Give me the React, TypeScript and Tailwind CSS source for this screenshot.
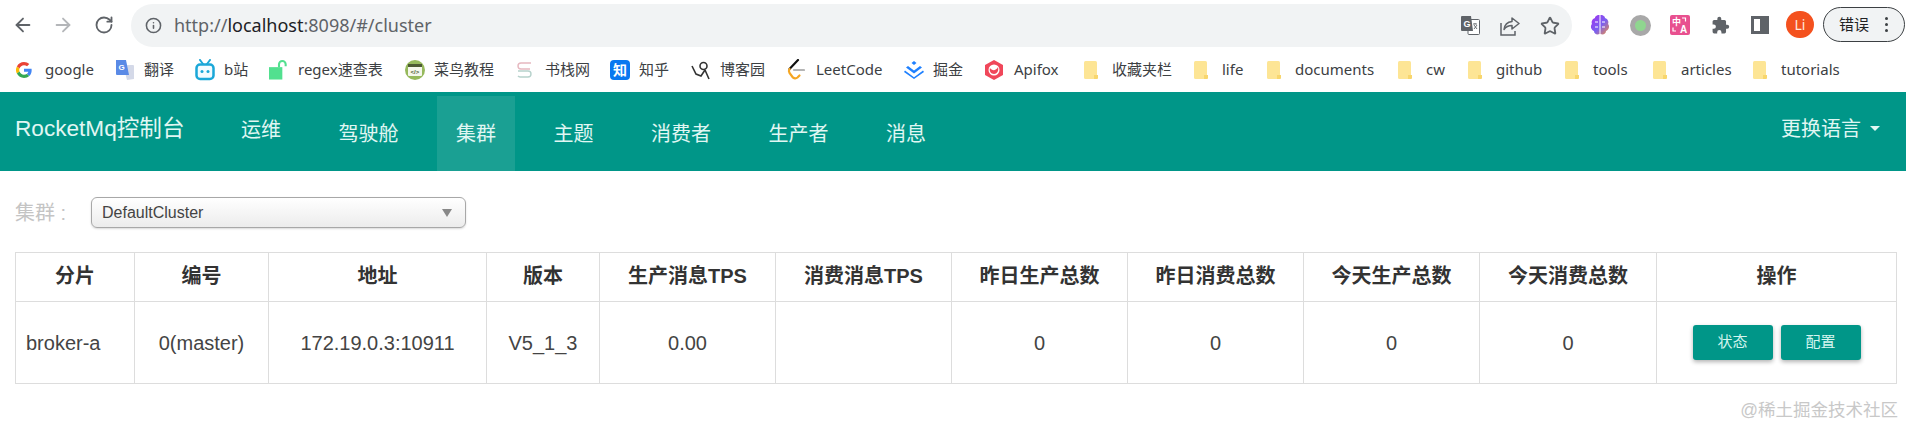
import type { ReactNode } from "react";
import { ArrowLeft, ArrowRight, Info, RotateCw, Star } from "lucide-react";

const body = "font-['Liberation_Sans','Noto_Sans_CJK_SC',sans-serif]";
const chrome = "font-['Noto_Sans','Noto_Sans_CJK_SC',sans-serif]";

function Folder() {
  return (
    <svg width="16" height="20" viewBox="0 0 16 20" className="shrink-0">
      <rect x="1" y="1" width="13" height="18" rx="1.5" fill="#fde595" />
      <path d="M11 15h4v3a1 1 0 0 1-1 1h-3z" fill="#f8d66d" />
    </svg>
  );
}

function GoogleIcon() {
  return (
    <svg width="16" height="16" viewBox="0 0 48 48">
      <path fill="#EA4335" d="M24 9.5c3.5 0 6.7 1.3 9.1 3.4l6.800-6.800C35.800 2.400 30.300 0 24 0 14.600 0 6.600 5.400 2.700 13.200l7.900 6.100C12.500 13.500 17.800 9.500 24 9.500z" />
      <path fill="#4285F4" d="M47 24.500c0-1.600-.1-3.100-.4-4.500H24v9h13c-.6 3-2.300 5.500-4.800 7.200l7.700 6C44.400 37.900 47 31.800 47 24.500z" />
      <path fill="#FBBC05" d="M10.500 28.700a14.500 14.500 0 0 1 0-9.400l-7.900-6.100a24 24 0 0 0 0 21.600z" />
      <path fill="#34A853" d="M24 48c6.500 0 11.900-2.100 15.900-5.800l-7.700-6c-2.100 1.400-4.900 2.300-8.200 2.300-6.200 0-11.500-4-13.400-9.800l-7.900 6.100C6.600 42.600 14.600 48 24 48z" />
    </svg>
  );
}

function TranslateIcon() {
  return (
    <svg width="20" height="22" viewBox="0 0 20 22">
      <path d="M8 6h10a1 1 0 0 1 1 1v13l-7 1z" fill="#d4d9e8" />
      <path d="M1 1h10l3 15H2a1 1 0 0 1-1-1z" fill="#5a8ae6" />
      <text x="3.500" y="11" fontSize="8" fontWeight="700" fill="#fff" fontFamily="Liberation Sans">G</text>
    </svg>
  );
}

function BiliIcon() {
  return (
    <svg width="20" height="22" viewBox="0 0 20 22">
      <path d="M5 1l3 4M15 1l-3 4" stroke="#1aa7d8" strokeWidth="2" strokeLinecap="round" />
      <rect x="1.500" y="5.500" width="17" height="14.500" rx="3.500" fill="#f2fbff" stroke="#1aa7d8" strokeWidth="2.500" />
      <circle cx="7" cy="12.500" r="1.500" fill="#1aa7d8" />
      <circle cx="13" cy="12.500" r="1.500" fill="#1aa7d8" />
    </svg>
  );
}

function LockIcon() {
  return (
    <svg width="21" height="22" viewBox="0 0 21 22">
      <rect x="0" y="8" width="14" height="13" fill="#52e08f" />
      <path d="M10.500 8V5a3.500 3.500 0 0 1 7 0v2" fill="none" stroke="#52e08f" strokeWidth="2.200" />
    </svg>
  );
}

function RunoobIcon() {
  return (
    <svg width="20" height="20" viewBox="0 0 20 20">
      <circle cx="10" cy="10" r="10" fill="#96b95c" />
      <rect x="3" y="4" width="14" height="12" rx="1" fill="#f4f7ec" />
      <rect x="3" y="4" width="14" height="3" fill="#4c5a33" />
      <text x="5.500" y="14" fontSize="6" fontWeight="700" fill="#4c5a33" fontFamily="Liberation Sans">{"</>"}</text>
    </svg>
  );
}

function BookStackIcon() {
  return (
    <svg width="17" height="18" viewBox="0 0 17 18" fill="none" strokeWidth="1.400">
      <path d="M15 2H5a2.800 2.800 0 0 0 0 6h9" stroke="#e6b8c0" />
      <path d="M15 8a2.800 2.800 0 0 1 0 .1M2 10h10a3 3 0 0 1 0 6H4a3 3 0 0 1-2-1" stroke="#b7d2cc" />
    </svg>
  );
}

function ZhihuIcon() {
  return (
    <div className={"flex h-5 w-5 items-center justify-center rounded-[4px] bg-[#0a78f0] text-[14px] font-bold leading-none text-white " + chrome}>知</div>
  );
}

function CnblogsIcon() {
  return (
    <svg width="20" height="20" viewBox="0 0 20 20" fill="none" stroke="#333" strokeWidth="1.600">
      <circle cx="12.500" cy="6" r="3.500" />
      <path d="M1 6l4 8 5 2 4-6M14 10l4 9" />
    </svg>
  );
}

function LeetCodeIcon() {
  return (
    <svg width="18" height="21" viewBox="0 0 18 21" fill="none" strokeWidth="2.200" strokeLinecap="round">
      <path d="M11 1L2.500 10" stroke="#111" />
      <path d="M2.500 10a4 4 0 0 0 0 4l3 4a3.500 3.500 0 0 0 5 .5l2-2" stroke="#f5a623" />
      <path d="M7 11h10" stroke="#b5b5b5" />
    </svg>
  );
}

function JuejinIcon() {
  return (
    <svg width="20" height="18" viewBox="0 0 20 18" fill="#1e80ff">
      <path d="M10 0l2.500 2L10 4 7.500 2z" />
      <path d="M4 5l6 4.500L16 5l2 1.600-8 6-8-6z" />
      <path d="M1 9.500l9 6.800 9-6.800 1 1.500-10 7-10-7z" />
    </svg>
  );
}

function ApifoxIcon() {
  return (
    <svg width="18" height="20" viewBox="0 0 18 20">
      <path d="M9 0l9 5v10l-9 5-9-5V5z" fill="#f0475a" />
      <circle cx="9" cy="10" r="5.500" fill="#fff" />
      <path d="M5 8c2 3 6 3 8-1 1 4-1 7-4 7s-5-3-4-6z" fill="#f0475a" />
    </svg>
  );
}

type Bookmark = { label: string; icon: ReactNode; width: string };

const bookmarks: Bookmark[] = [
  { label: "google", icon: <GoogleIcon />, width: "w-[99px]" },
  { label: "翻译", icon: <TranslateIcon />, width: "w-[80px]" },
  { label: "b站", icon: <BiliIcon />, width: "w-[74px]" },
  { label: "regex速查表", icon: <LockIcon />, width: "w-[136px]" },
  { label: "菜鸟教程", icon: <RunoobIcon />, width: "w-[111px]" },
  { label: "书栈网", icon: <BookStackIcon />, width: "w-[94px]" },
  { label: "知乎", icon: <ZhihuIcon />, width: "w-[81px]" },
  { label: "博客园", icon: <CnblogsIcon />, width: "w-[96px]" },
  { label: "LeetCode", icon: <LeetCodeIcon />, width: "w-[117px]" },
  { label: "掘金", icon: <JuejinIcon />, width: "w-[81px]" },
  { label: "Apifox", icon: <ApifoxIcon />, width: "w-[98px]" },
  { label: "收藏夹栏", icon: <Folder />, width: "w-[110px]" },
  { label: "life", icon: <Folder />, width: "w-[73px]" },
  { label: "documents", icon: <Folder />, width: "w-[131px]" },
  { label: "cw", icon: <Folder />, width: "w-[70px]" },
  { label: "github", icon: <Folder />, width: "w-[97px]" },
  { label: "tools", icon: <Folder />, width: "w-[88px]" },
  { label: "articles", icon: <Folder />, width: "w-[100px]" },
  { label: "tutorials", icon: <Folder />, width: "w-[100px]" },
];

function TranslateChip() {
  return (
    <svg width="19" height="19" viewBox="0 0 19 19">
      <rect x="7" y="3.500" width="11.500" height="15" rx="1" fill="#fff" stroke="#5f6368" />
      <path d="M1 0h9l2 15H1a1 1 0 0 1-1-1V1a1 1 0 0 1 1-1z" fill="#5f6368" />
      <text x="2.500" y="11" fontSize="9" fontWeight="700" fill="#fff" fontFamily="Liberation Sans">G</text>
      <path d="M12 8h4M14 7v1M13 13l3-4M13 9l3 4" stroke="#5f6368" strokeWidth="0.900" fill="none" />
    </svg>
  );
}

function ShareIcon() {
  return (
    <svg width="20" height="20" viewBox="0 0 20 20" fill="none" stroke="#5f6368" strokeWidth="1.500">
      <path d="M1 7v12h14v-4" />
      <path d="M12 2l7 5.500-7 5.500V9.500c-3.500 0-6 1-8 4 .5-4 3-7.500 8-8z" strokeLinejoin="round" />
    </svg>
  );
}

function BrainIcon() {
  return (
    <svg width="20" height="22" viewBox="0 0 20 22">
      <defs>
        <linearGradient id="brain" x1="0" y1="0" x2="1" y2="1">
          <stop offset="0" stopColor="#a030f0" />
          <stop offset="0.550" stopColor="#7a60f0" />
          <stop offset="1" stopColor="#f09040" />
        </linearGradient>
      </defs>
      <path d="M9.500 1C6 1 5 3 5 4 2 5 1 8 2 10c-2 2-1 6 2 7 0 3 3 4 5.500 3zM10.500 1C14 1 15 3 15 4c3 1 4 4 3 6 2 2 1 6-2 7 0 3-3 4-5.500 3z" fill="url(#brain)" />
      <path d="M5 8h3M12 8h3M5 13h3M12 13h3" stroke="#fff" strokeWidth="1" />
    </svg>
  );
}

function PinkTranslate() {
  return (
    <svg width="20" height="20" viewBox="0 0 20 20">
      <rect width="20" height="20" rx="2" fill="#e8508f" />
      <text x="2" y="10" fontSize="9" fontWeight="700" fill="#fff" fontFamily="Noto Sans CJK SC">中</text>
      <text x="10" y="18" fontSize="10" fontWeight="700" fill="#fff" fontFamily="Liberation Sans">A</text>
      <path d="M12 3h3.500v3.500M3 12.500V16h3" stroke="#fff" strokeWidth="1.200" fill="none" />
    </svg>
  );
}

function PuzzleIcon() {
  return (
    <svg width="19" height="19" viewBox="0 0 24 24" fill="#5f6368">
      <path d="M20.500 11H19V7a2 2 0 0 0-2-2h-4V3.500a2.500 2.500 0 0 0-5 0V5H4a2 2 0 0 0-2 2v3.800h1.500a2.700 2.700 0 0 1 0 5.400H2V20a2 2 0 0 0 2 2h3.800v-1.500a2.700 2.700 0 0 1 5.400 0V22H17a2 2 0 0 0 2-2v-4h1.500a2.500 2.500 0 0 0 0-5z" />
    </svg>
  );
}

function BrowserToolbar() {
  return (
    <div className={"flex h-[47px] items-start bg-white " + chrome}>
      <div className="ml-[3px] flex h-[50px] w-[40px] items-center justify-center text-[#5f6368]">
        <ArrowLeft size={22} strokeWidth={2} />
      </div>
      <div className="flex h-[50px] w-[40px] items-center justify-center text-[#b4b6b9]">
        <ArrowRight size={22} strokeWidth={2} />
      </div>
      <div className="ml-px flex h-[50px] w-[40px] items-center justify-center text-[#5f6368]">
        <RotateCw size={20} strokeWidth={2.2} />
      </div>
      <div className="ml-[7px] mt-[4px] flex h-[43px] w-[1441px] items-center rounded-full bg-[#f1f3f4] pl-[14px] pr-[2px]">
        <Info size={17} strokeWidth={2.2} className="shrink-0 text-[#5f6368]" />
        <div className="ml-[12px] flex-1 text-[18px] text-[#5f6368]">
          http://<span className="text-[#202124]">localhost</span>:8098/#/cluster
        </div>
        <div className="flex w-[40px] justify-center"><TranslateChip /></div>
        <div className="flex w-[40px] justify-center"><ShareIcon /></div>
        <div className="flex w-[40px] justify-center text-[#5f6368]"><Star size={20} strokeWidth={2.2} /></div>
      </div>
      <div className="ml-[8px] flex h-[50px] w-[40px] items-center justify-center"><BrainIcon /></div>
      <div className="flex h-[50px] w-[40px] items-center justify-center">
        <div className="flex h-[21px] w-[21px] items-center justify-center rounded-full bg-[#a8a8a8]">
          <div className="h-[11px] w-[11px] rounded-full bg-[#8fd68f]" />
        </div>
      </div>
      <div className="flex h-[50px] w-[40px] items-center justify-center"><PinkTranslate /></div>
      <div className="flex h-[50px] w-[40px] items-center justify-center"><PuzzleIcon /></div>
      <div className="flex h-[50px] w-[40px] items-center justify-center">
        <div className="flex h-[18px] w-[18px] justify-end border-[3px] border-[#5f6368]">
          <div className="h-full w-[6px] bg-[#5f6368]" />
        </div>
      </div>
      <div className="ml-[6px] mt-[11px] flex h-[27px] w-[28px] items-center justify-center rounded-full bg-[#f4511e] text-[14px] text-[#ffe9df]">Li</div>
      <div className="ml-[9px] mt-[7px] flex h-[35px] w-[82px] shrink-0 items-center rounded-full border border-[#3c4043] bg-[#f1f3f4] pl-[15px] text-[15px] text-[#202124]">
        错误
        <div className="ml-[16px] flex flex-col gap-[3px]">
          <span className="h-[3px] w-[3px] rounded-full bg-[#3c4043]" />
          <span className="h-[3px] w-[3px] rounded-full bg-[#3c4043]" />
          <span className="h-[3px] w-[3px] rounded-full bg-[#3c4043]" />
        </div>
      </div>
    </div>
  );
}

function BookmarksBar() {
  return (
    <div className={"flex h-[45px] items-center bg-white pl-[16px] text-[15px] text-[#3c4043] " + chrome}>
      {bookmarks.map((b) => (
        <div key={b.label} className={"flex shrink-0 items-center gap-[9px] " + b.width}>
          <div className="flex w-[20px] shrink-0 justify-start">{b.icon}</div>
          <span className="whitespace-nowrap">{b.label}</span>
        </div>
      ))}
    </div>
  );
}

const navItems = ["运维", "驾驶舱", "集群", "主题", "消费者", "生产者", "消息"];

function NavBar() {
  return (
    <div className={"flex h-[79px] items-stretch bg-[#009688] pl-[15px] pr-[26px] text-[#e0f7f3] " + body}>
      <div className="flex w-[207px] items-center pb-[5px] text-[22.6px]">RocketMq控制台</div>
      <div className="flex gap-[19.5px] pt-[4px]">
        {navItems.map((item) => (
          <div
            key={item}
            className={
              "flex items-center px-[19px] text-[20px] " +
              (item === "集群" ? "bg-[#1aa093] " : "") +
              (item === "运维" ? "pb-[8px]" : "")
            }
          >
            {item}
          </div>
        ))}
      </div>
      <div className="ml-auto flex items-center gap-[9px] pb-[6px] text-[20px]">
        更换语言
        <span className="h-0 w-0 border-x-[5px] border-t-[5px] border-x-transparent border-t-[#e0f7f3]" />
      </div>
    </div>
  );
}

function ClusterSelect() {
  return (
    <div className="flex items-center pl-[15px] pt-[26px]">
      <div className="w-[76px] text-[20px] text-[#c4c4c4]">集群 :</div>
      <div className="flex h-[31px] w-[375px] items-center justify-between rounded-[6px] border border-[#a8a8a8] bg-linear-to-b from-white to-[#ececec] pl-[10px] pr-[13px] shadow-[0_1px_2px_rgba(0,0,0,0.15)]">
        <span className="text-[16px] text-[#444]">DefaultCluster</span>
        <span className="h-0 w-0 border-x-[5px] border-t-[8px] border-x-transparent border-t-[#888]" />
      </div>
    </div>
  );
}

const columns = [
  { title: "分片", width: "w-[119px]", value: "broker-a" },
  { title: "编号", width: "w-[134px]", value: "0(master)" },
  { title: "地址", width: "w-[218px]", value: "172.19.0.3:10911" },
  { title: "版本", width: "w-[113px]", value: "V5_1_3" },
  { title: "生产消息TPS", width: "w-[176px]", value: "0.00" },
  { title: "消费消息TPS", width: "w-[176px]", value: "" },
  { title: "昨日生产总数", width: "w-[176px]", value: "0" },
  { title: "昨日消费总数", width: "w-[176px]", value: "0" },
  { title: "今天生产总数", width: "w-[176px]", value: "0" },
  { title: "今天消费总数", width: "w-[177px]", value: "0" },
  { title: "操作", width: "w-[240px]", value: "" },
];

function ClusterTable() {
  return (
    <table className="ml-[15px] mt-[24px] w-[1882px] table-fixed border-collapse border border-[#ddd] text-[#444]">
      <colgroup>
        {columns.map((c) => (
          <col key={c.title} className={c.width} />
        ))}
      </colgroup>
      <thead>
        <tr className="h-[49px]">
          {columns.map((c) => (
            <th key={c.title} className="border border-[#ddd] px-0 pb-[2px] text-center text-[20px] font-bold text-[#333]">
              {c.title}
            </th>
          ))}
        </tr>
      </thead>
      <tbody>
        <tr className="h-[82px]">
          {columns.map((c, i) => (
            <td
              key={c.title}
              className={"border border-[#ddd] text-[20px] " + (i === 0 ? "pl-[10px] text-left" : "text-center")}
            >
              {c.title === "操作" ? (
                <div className="flex justify-center gap-[8px]">
                  <button className="h-[35px] w-[80px] rounded-[3px] bg-[#009688] text-[15px] text-[#d5f5ef] shadow-[0_2px_4px_rgba(0,0,0,0.3)]">状态</button>
                  <button className="h-[35px] w-[80px] rounded-[3px] bg-[#009688] text-[15px] text-[#d5f5ef] shadow-[0_2px_4px_rgba(0,0,0,0.3)]">配置</button>
                </div>
              ) : (
                c.value
              )}
            </td>
          ))}
        </tr>
      </tbody>
    </table>
  );
}

export default function App() {
  return (
    <div className={"h-[428px] w-[1906px] overflow-hidden bg-white " + body}>
      <BrowserToolbar />
      <BookmarksBar />
      <NavBar />
      <ClusterSelect />
      <ClusterTable />
      <div className="mt-[14px] pr-[8px] text-right text-[17.5px] leading-[24px] text-[#c8c8c8]">@稀土掘金技术社区</div>
    </div>
  );
}
